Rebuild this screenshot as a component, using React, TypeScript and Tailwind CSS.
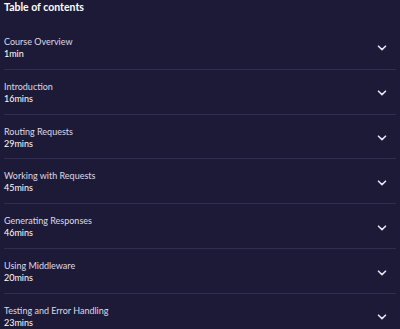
import React from "react";

const items = [
  ["Course Overview", "1min"],
  ["Introduction", "16mins"],
  ["Routing Requests", "29mins"],
  ["Working with Requests", "45mins"],
  ["Generating Responses", "46mins"],
  ["Using Middleware", "20mins"],
  ["Testing and Error Handling", "23mins"],
];

function Chevron() {
  return (
    <svg width="10" height="6" viewBox="0 0 10 6" fill="none">
      <path d="M1.5 1.2 L5 4.6 L8.5 1.2" stroke="#e6e4f0" strokeWidth="1.6" strokeLinecap="round" strokeLinejoin="round" />
    </svg>
  );
}

export default function App() {
  return (
    <div className="w-[400px] h-[329px] overflow-hidden bg-[#1c1a36] text-white px-1" style={{ fontFamily: "Lato, 'Open Sans', sans-serif" }}>
      <div className="h-[25px] pt-[1px] text-[10.5px] font-bold leading-[12px]">Table of contents</div>
      <div className="flex flex-col">
        {items.map(([t, d]) => (
          <div key={t} className="h-[44.83px] shrink-0 flex items-center justify-between border-b border-[#2f2c55]">
            <div className="flex flex-col pt-[2px]">
              <span className="text-[9px] leading-[12px] text-[#dcdae8]">{t}</span>
              <span className="text-[9px] leading-[12px] text-white">{d}</span>
            </div>
            <div className="mr-[9px] mt-[3px]">
              <Chevron />
            </div>
          </div>
        ))}
      </div>
    </div>
  );
}
